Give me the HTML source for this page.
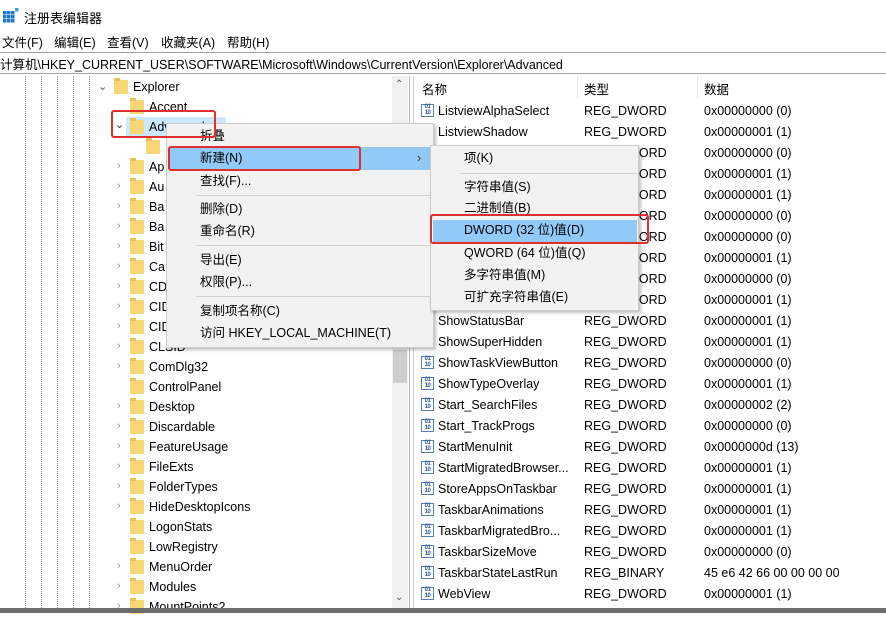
<!DOCTYPE html>
<html><head><meta charset="utf-8"><style>
*{margin:0;padding:0;box-sizing:border-box}
body{width:886px;height:613px;overflow:hidden;background:#fff;font-family:"Liberation Sans","Noto Sans CJK SC",sans-serif;font-size:12.5px;color:#000;position:relative}
.a{position:absolute;white-space:nowrap}
.t{position:absolute;white-space:nowrap;line-height:20px}
.fold{position:absolute;width:14px;height:14px;background:#f7d675;border-radius:1px}
.fold:before{content:"";position:absolute;left:0;top:-2px;width:6px;height:3px;background:#e8c35a}
.chev{position:absolute;color:#999;font-size:11px;line-height:20px}
.ic{position:absolute;width:13px;height:13px;border:1px solid #5a7db5;background:#fff;font-size:6px;line-height:5.5px;color:#2a56a8;font-weight:bold;text-align:center;letter-spacing:-0.5px;padding-top:0px}
.mi{position:absolute;white-space:nowrap;line-height:21px}
.sep{position:absolute;height:1px;background:#d0d0d0}
.red{position:absolute;border:2px solid #e0302c;border-radius:3px}
</style></head><body>
<div class="a" style="left:3px;top:8px;width:15px;height:15px;">
<svg width="16" height="16"><g fill="#1e78c8"><rect x="0" y="3" width="3.5" height="3.5"/><rect x="4" y="3" width="3.5" height="3.5"/><rect x="8" y="3" width="3.5" height="3.5"/><rect x="0" y="7" width="3.5" height="3.5"/><rect x="4" y="7" width="3.5" height="3.5"/><rect x="8" y="7" width="3.5" height="3.5"/><rect x="0" y="11" width="3.5" height="3.5"/><rect x="4" y="11" width="3.5" height="3.5"/><rect x="8" y="11" width="3.5" height="3.5"/></g><rect x="12" y="0" width="3.5" height="3.5" fill="#3aa0e8"/></svg></div>
<div class="a" style="left:24px;top:8px;font-size:13px">注册表编辑器</div>
<div class="a" style="left:2px;top:32px">文件(F)</div>
<div class="a" style="left:54px;top:32px">编辑(E)</div>
<div class="a" style="left:107px;top:32px">查看(V)</div>
<div class="a" style="left:161px;top:32px">收藏夹(A)</div>
<div class="a" style="left:227px;top:32px">帮助(H)</div>
<div class="a" style="left:0;top:52px;width:886px;height:22px;border-top:1px solid #a0a0a0;border-bottom:1px solid #a0a0a0"></div>
<div class="a" style="left:0;top:54px">计算机\HKEY_CURRENT_USER\SOFTWARE\Microsoft\Windows\CurrentVersion\Explorer\Advanced</div>
<div class="a" style="left:25px;top:76px;height:532px;border-left:1px dotted #999"></div>
<div class="a" style="left:41px;top:76px;height:532px;border-left:1px dotted #999"></div>
<div class="a" style="left:57px;top:76px;height:532px;border-left:1px dotted #999"></div>
<div class="a" style="left:73px;top:76px;height:532px;border-left:1px dotted #999"></div>
<div class="a" style="left:89px;top:76px;height:532px;border-left:1px dotted #999"></div>
<div class="chev" style="left:98px;top:77px;color:#555">&#8964;</div>
<div class="fold" style="left:114px;top:80px"></div><div class="t" style="left:133px;top:77px">Explorer</div>
<div class="fold" style="left:130px;top:100px"></div><div class="t" style="left:149px;top:97px">Accent</div>
<div class="a" style="left:126px;top:117px;width:100px;height:20px;background:#cce8ff"></div>
<div class="chev" style="left:115px;top:115px;color:#333">&#8964;</div>
<div class="fold" style="left:130px;top:120px"></div><div class="t" style="left:149px;top:117px">Advanced</div>
<div class="fold" style="left:146px;top:140px"></div>
<div id="tree"></div>
<div class="a" style="left:392px;top:76px;width:16px;height:532px;background:#f0f0f0"></div>
<div class="a" style="left:393px;top:350px;width:14px;height:33px;background:#cdcdcd"></div>
<div class="a" style="left:395px;top:79px;font-size:10px;color:#555">&#8963;</div>
<div class="a" style="left:395px;top:592px;font-size:10px;color:#555">&#8964;</div>
<div class="a" style="left:409px;top:76px;width:1px;height:532px;background:#bbb"></div>
<div class="a" style="left:413px;top:76px;width:1px;height:532px;background:#ccc"></div>
<div class="a" style="left:422px;top:79px">名称</div>
<div class="a" style="left:584px;top:79px">类型</div>
<div class="a" style="left:704px;top:79px">数据</div>
<div class="a" style="left:577px;top:76px;width:1px;height:22px;background:#e5e5e5"></div>
<div class="a" style="left:697px;top:76px;width:1px;height:22px;background:#e5e5e5"></div>
<div id="list">
</div>
<script>
var tr=["Ap","Au","Ba","Ba","Bit","Ca","CD","CID","CID","CLSID","ComDlg32","ControlPanel","Desktop","Discardable","FeatureUsage","FileExts","FolderTypes","HideDesktopIcons","LogonStats","LowRegistry","MenuOrder","Modules","MountPoints2"];
var nc=[11,18,19];var h="";
tr.forEach(function(n,i){var y=157+i*20;if(nc.indexOf(i)<0)h+='<div class="chev" style="left:117px;top:'+(y-1)+'px">&#8250;</div>';h+='<div class="fold" style="left:130px;top:'+(y+3)+'px"></div><div class="t" style="left:149px;top:'+y+'px">'+n+'</div>';});
document.getElementById("tree").innerHTML=h;
var L=[["ListviewAlphaSelect","REG_DWORD","0x00000000 (0)"],["ListviewShadow","REG_DWORD","0x00000001 (1)"],["","REG_DWORD","0x00000000 (0)"],["","REG_DWORD","0x00000001 (1)"],["","REG_DWORD","0x00000001 (1)"],["","REG_DWORD","0x00000000 (0)"],["","REG_DWORD","0x00000000 (0)"],["","REG_DWORD","0x00000001 (1)"],["","REG_DWORD","0x00000000 (0)"],["","REG_DWORD","0x00000001 (1)"],["ShowStatusBar","REG_DWORD","0x00000001 (1)"],["ShowSuperHidden","REG_DWORD","0x00000001 (1)"],["ShowTaskViewButton","REG_DWORD","0x00000000 (0)"],["ShowTypeOverlay","REG_DWORD","0x00000001 (1)"],["Start_SearchFiles","REG_DWORD","0x00000002 (2)"],["Start_TrackProgs","REG_DWORD","0x00000000 (0)"],["StartMenuInit","REG_DWORD","0x0000000d (13)"],["StartMigratedBrowser...","REG_DWORD","0x00000001 (1)"],["StoreAppsOnTaskbar","REG_DWORD","0x00000001 (1)"],["TaskbarAnimations","REG_DWORD","0x00000001 (1)"],["TaskbarMigratedBro...","REG_DWORD","0x00000001 (1)"],["TaskbarSizeMove","REG_DWORD","0x00000000 (0)"],["TaskbarStateLastRun","REG_BINARY","45 e6 42 66 00 00 00 00"],["WebView","REG_DWORD","0x00000001 (1)"]];
h="";L.forEach(function(r,i){var y=101+i*21;h+='<div class="ic" style="left:421px;top:'+(y+3)+'px">01<br>10</div><div class="t" style="left:438px;top:'+y+'px">'+r[0]+'</div><div class="t" style="left:584px;top:'+y+'px">'+r[1]+'</div><div class="t" style="left:704px;top:'+y+'px">'+r[2]+'</div>';});
document.getElementById("list").innerHTML=h;
</script>
<div class="a" style="left:0;top:608px;width:886px;height:5px;background:#6d6d6d"></div>
<div class="a" style="left:166px;top:123px;width:268px;height:225px;background:#f2f2f2;border:1px solid #ccc;box-shadow:2px 2px 3px rgba(0,0,0,.25)"></div>
<div class="a" style="left:169px;top:147px;width:262px;height:23px;background:#91c9f7"></div>
<div class="mi" style="left:200px;top:126px">折叠</div>
<div class="mi" style="left:200px;top:148px">新建(N)</div>
<div class="mi" style="left:417px;top:148px;color:#333">&#8250;</div>
<div class="mi" style="left:200px;top:171px">查找(F)...</div>
<div class="sep" style="left:196px;top:195px;width:234px"></div>
<div class="mi" style="left:200px;top:199px">删除(D)</div>
<div class="mi" style="left:200px;top:221px">重命名(R)</div>
<div class="sep" style="left:196px;top:245px;width:234px"></div>
<div class="mi" style="left:200px;top:250px">导出(E)</div>
<div class="mi" style="left:200px;top:272px">权限(P)...</div>
<div class="sep" style="left:196px;top:296px;width:234px"></div>
<div class="mi" style="left:200px;top:301px">复制项名称(C)</div>
<div class="mi" style="left:200px;top:323px">访问 HKEY_LOCAL_MACHINE(T)</div>
<div class="a" style="left:430px;top:145px;width:209px;height:166px;background:#f2f2f2;border:1px solid #ccc;box-shadow:2px 2px 3px rgba(0,0,0,.25)"></div>
<div class="a" style="left:433px;top:220px;width:204px;height:22px;background:#91c9f7"></div>
<div class="mi" style="left:464px;top:148px">项(K)</div>
<div class="sep" style="left:460px;top:173px;width:177px"></div>
<div class="mi" style="left:464px;top:177px">字符串值(S)</div>
<div class="mi" style="left:464px;top:198px">二进制值(B)</div>
<div class="mi" style="left:464px;top:220px">DWORD (32 位)值(D)</div>
<div class="mi" style="left:464px;top:243px">QWORD (64 位)值(Q)</div>
<div class="mi" style="left:464px;top:265px">多字符串值(M)</div>
<div class="mi" style="left:464px;top:287px">可扩充字符串值(E)</div>
<div class="red" style="left:111px;top:110px;width:105px;height:28px"></div>
<div class="red" style="left:168px;top:146px;width:193px;height:25px"></div>
<div class="red" style="left:430px;top:214px;width:219px;height:30px"></div>
</body></html>
